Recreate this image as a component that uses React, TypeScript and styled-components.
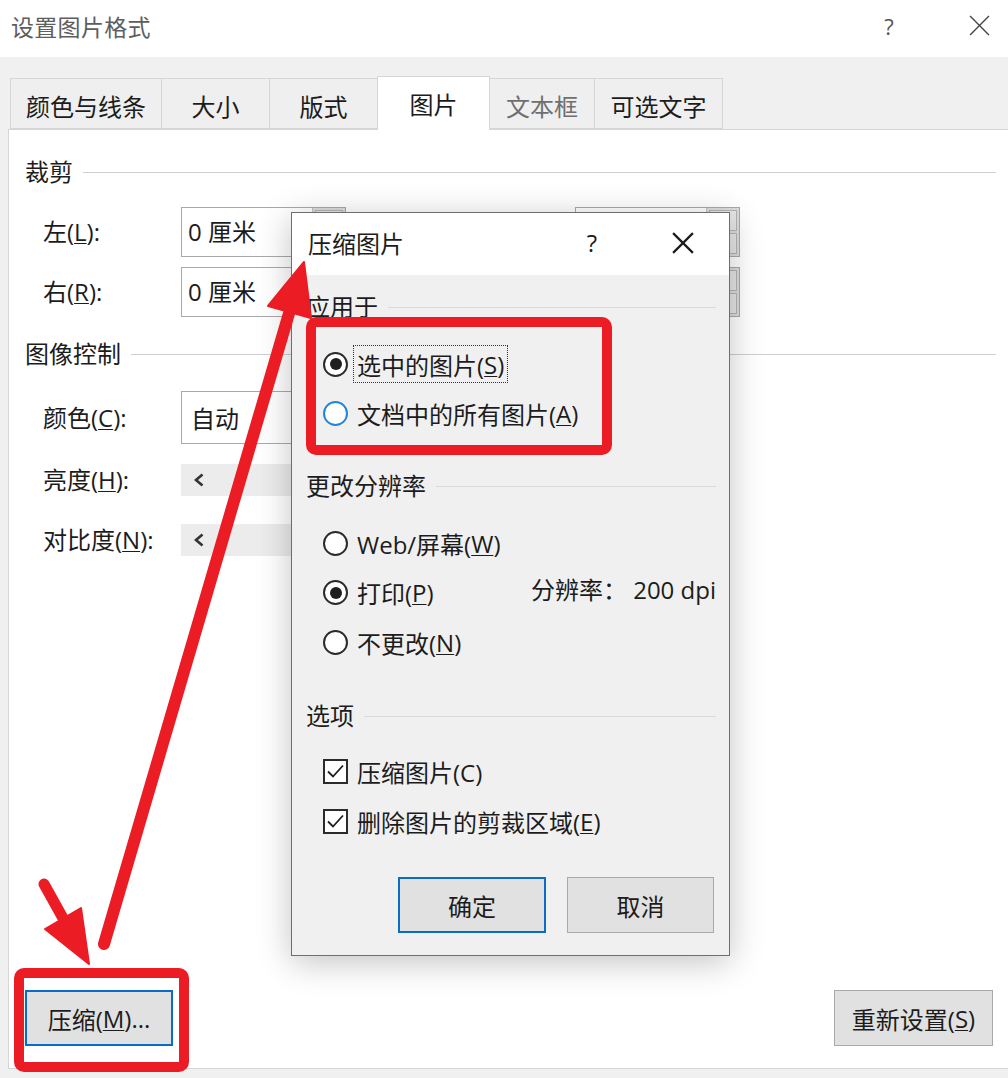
import React from "react";
import styled, { createGlobalStyle } from "styled-components";

const FONT = `"Open Sans", "Noto Sans CJK SC", "Noto Sans", sans-serif`;

const Global = createGlobalStyle`
  html, body { margin: 0; padding: 0; background: #f0f0f0; }
  body { font-family: ${FONT}; color: #1c1c1c; }
  * { box-sizing: border-box; }
  u { text-decoration-thickness: 1px; text-underline-offset: 2px; }
`;

const Page = styled.div`
  position: relative;
  width: 1008px;
  height: 1078px;
  overflow: hidden;
  background: #f0f0f0;
  display: flex;
  flex-direction: column;
`;

/* ---------- window title bar ---------- */
const TitleBar = styled.div`
  flex: none;
  height: 57px;
  background: #fff;
  display: flex;
  align-items: center;
  padding: 0 9px 6px 11px;
`;
const WinTitle = styled.div`
  flex: 1;
  font-size: 23px;
  color: #5e5e5e;
  letter-spacing: 0.3px;
`;
const TitleActions = styled.div<{ $gap: number }>`
  display: flex;
  align-items: center;
  gap: ${(p) => p.$gap}px;
`;
const HelpGlyph = styled.div<{ $size: number; $color: string }>`
  width: 40px;
  text-align: center;
  font-size: ${(p) => p.$size}px;
  color: ${(p) => p.$color};
  line-height: 1;
`;
const CloseBox = styled.div`
  width: 40px;
  display: flex;
  align-items: center;
  justify-content: center;
`;

/* ---------- tabs ---------- */
const TabStrip = styled.div`
  flex: none;
  display: flex;
  align-items: flex-end;
  margin-top: 19px;
  height: 53px;
  padding-left: 10px;
  position: relative;
  z-index: 1;
`;
const Tab = styled.div<{ $w: number; $active?: boolean; $disabled?: boolean }>`
  width: ${(p) => p.$w}px;
  height: ${(p) => (p.$active ? 54 : 51)}px;
  margin-bottom: ${(p) => (p.$active ? -1 : 0)}px;
  margin-right: -1px;
  background: ${(p) => (p.$active ? "#fff" : "#efefef")};
  border: 1px solid #d6d6d6;
  border-bottom: ${(p) => (p.$active ? "none" : "1px solid #d6d6d6")};
  display: flex;
  align-items: center;
  justify-content: center;
  padding-top: ${(p) => (p.$active ? 0 : 4)}px;
  font-size: 24px;
  color: ${(p) => (p.$disabled ? "#6f6f6f" : "#1c1c1c")};
`;

/* ---------- main panel ---------- */
const Panel = styled.div`
  flex: none;
  height: 940px;
  width: 1004px;
  margin-left: 8px;
  background: #fff;
  border: 1px solid #d6d6d6;
  display: flex;
  flex-direction: column;
  padding: 0 18px 22px 16px;
`;
const SectionHead = styled.div<{ $mt: number; $line?: string }>`
  display: flex;
  align-items: center;
  gap: 10px;
  height: 30px;
  margin-top: ${(p) => p.$mt}px;
  font-size: 24px;
  line-height: 30px;
  color: #1c1c1c;
  white-space: nowrap;
  &::after {
    content: "";
    flex: 1;
    height: 1px;
    background: ${(p) => p.$line || "#cfcfcf"};
  }
`;
const PanelHead = styled(SectionHead)`
  margin-right: -3px;
`;
const CropGrid = styled.div`
  display: grid;
  grid-template-columns: 138px 165px 229px 165px;
  grid-auto-rows: 50px;
  row-gap: 10px;
  margin: 20px 0 0 18px;
  align-items: center;
`;
const FieldLabel = styled.div`
  font-size: 24px;
  line-height: 30px;
  white-space: nowrap;
`;
const SpinBox = styled.div`
  height: 50px;
  display: flex;
  border: 1px solid #a9a9a9;
  background: #fff;
`;
const SpinValue = styled.div`
  flex: 1;
  display: flex;
  align-items: center;
  padding: 0 0 3px 6px;
  font-size: 24px;
`;
const SpinButtons = styled.div`
  width: 33px;
  display: flex;
  flex-direction: column;
  background: #dcdcdc;
  border-left: 1px solid #c4c4c4;
  padding: 2px;
  gap: 2px;
`;
const SpinButton = styled.div`
  flex: 1;
  border: 1px solid #b4b4b4;
  background: #e6e6e6;
`;
const ControlRow = styled.div<{ $mt: number; $h: number }>`
  display: grid;
  grid-template-columns: 138px auto;
  align-items: center;
  height: ${(p) => p.$h}px;
  margin: ${(p) => p.$mt}px 0 0 18px;
`;
const DropBox = styled.div`
  width: 300px;
  height: 53px;
  border: 1px solid #a9a9a9;
  background: #fff;
  display: flex;
  align-items: center;
  padding-left: 9px;
  font-size: 24px;
`;
const SliderBar = styled.div`
  width: 380px;
  height: 32px;
  background: #ececec;
  display: flex;
  align-items: center;
  padding-left: 13px;
`;
const Grow = styled.div`
  flex: 1;
`;
const BottomRow = styled.div`
  display: flex;
  justify-content: space-between;
  align-items: center;
`;
const WinButton = styled.div<{ $w: number; $primary?: boolean }>`
  width: ${(p) => p.$w}px;
  height: 56px;
  background: #e1e1e1;
  border: ${(p) => (p.$primary ? "2px solid #0a6cc8" : "1px solid #a9a9a9")};
  display: flex;
  align-items: center;
  justify-content: center;
  font-size: 24px;
  color: #1c1c1c;
  white-space: nowrap;
`;

/* ---------- compress dialog ---------- */
const Dialog = styled.div`
  position: absolute;
  left: 291px;
  top: 212px;
  width: 439px;
  height: 744px;
  border: 1px solid #6e6e6e;
  background: #f0f0f0;
  box-shadow: 0 6px 32px rgba(0, 0, 0, 0.24);
  display: flex;
  flex-direction: column;
`;
const DlgTitleBar = styled.div`
  flex: none;
  height: 62px;
  background: #fff;
  display: flex;
  align-items: center;
  padding: 0 26px 3px 16px;
`;
const DlgTitle = styled.div`
  flex: 1;
  font-size: 24px;
  color: #1c1c1c;
`;
const DlgBody = styled.div`
  flex: 1;
  display: flex;
  flex-direction: column;
  padding: 17px 13px 20px 14px;
`;
const OptionGroup = styled.div<{ $mt: number; $gap: number }>`
  display: flex;
  flex-direction: column;
  gap: ${(p) => p.$gap}px;
  margin-top: ${(p) => p.$mt}px;
  padding-left: 17px;
`;
const OptionRow = styled.div`
  height: 40px;
  display: flex;
  align-items: center;
  gap: 5px;
`;
const OptionLabel = styled.div<{ $focus?: boolean }>`
  height: 38px;
  display: flex;
  align-items: center;
  padding: 0 3px;
  border: 1px ${(p) => (p.$focus ? "dotted #333" : "solid transparent")};
  font-size: 24px;
  color: #1c1c1c;
  white-space: nowrap;
`;
const Radio = styled.div<{ $checked?: boolean; $hover?: boolean }>`
  width: 25px;
  height: 25px;
  flex: none;
  border-radius: 50%;
  border: 2px solid ${(p) => (p.$hover ? "#1f86e0" : "#2b2b2b")};
  background: #fff;
  display: flex;
  align-items: center;
  justify-content: center;
  &::after {
    content: "";
    display: ${(p) => (p.$checked ? "block" : "none")};
    width: 12px;
    height: 12px;
    border-radius: 50%;
    background: #1e1e1e;
  }
`;
const CheckBox = styled.div`
  width: 25px;
  height: 25px;
  flex: none;
  border: 2px solid #2b2b2b;
  background: #fff;
  display: flex;
  align-items: center;
  justify-content: center;
`;
const Spread = styled.div`
  display: flex;
  align-items: center;
  justify-content: space-between;
`;
const Resolution = styled.div`
  font-size: 24px;
  color: #1c1c1c;
  white-space: nowrap;
  padding-bottom: 8px;
`;
const DlgButtons = styled.div`
  display: flex;
  justify-content: flex-end;
  gap: 21px;
  margin-top: 36px;
  padding-right: 2px;
`;

/* ---------- annotations ---------- */
const Overlay = styled.svg`
  position: absolute;
  left: 0;
  top: 0;
  width: 1008px;
  height: 1078px;
  pointer-events: none;
`;

const CloseIcon = ({ size, stroke, color }: { size: number; stroke: number; color: string }) => (
  <svg width={size} height={size} viewBox="0 0 20 20">
    <path d="M1 1 L19 19 M19 1 L1 19" stroke={color} strokeWidth={stroke} fill="none" />
  </svg>
);

const Chevron = () => (
  <svg width="10" height="14" viewBox="0 0 10 14">
    <polyline points="8.5,1.5 2,7 8.5,12.5" stroke="#333" strokeWidth="2.6" fill="none" />
  </svg>
);

const Check = () => (
  <svg width="19" height="19" viewBox="0 0 19 19">
    <polyline points="2,9.5 7,14.5 17,3.5" stroke="#1e1e1e" strokeWidth="1.8" fill="none" />
  </svg>
);

const tabs = [
  { label: "颜色与线条", w: 152 },
  { label: "大小", w: 109 },
  { label: "版式", w: 109 },
  { label: "图片", w: 113, active: true },
  { label: "文本框", w: 106, disabled: true },
  { label: "可选文字", w: 129 },
];

const Spin = ({ value }: { value?: string }) => (
  <SpinBox>
    <SpinValue>{value}</SpinValue>
    <SpinButtons>
      <SpinButton />
      <SpinButton />
    </SpinButtons>
  </SpinBox>
);

export default function App() {
  const red = "#ec1c24";
  return (
    <>
      <Global />
      <Page>
        <TitleBar>
          <WinTitle>设置图片格式</WinTitle>
          <TitleActions $gap={50}>
            <HelpGlyph $size={22} $color="#555">?</HelpGlyph>
            <CloseBox>
              <CloseIcon size={21} stroke={1.3} color="#444" />
            </CloseBox>
          </TitleActions>
        </TitleBar>

        <TabStrip>
          {tabs.map((t) => (
            <Tab key={t.label} $w={t.w} $active={t.active} $disabled={t.disabled}>
              {t.label}
            </Tab>
          ))}
        </TabStrip>

        <Panel>
          <PanelHead $mt={27}>裁剪</PanelHead>
          <CropGrid>
            <FieldLabel>
              左(<u>L</u>):
            </FieldLabel>
            <Spin value="0 厘米" />
            <div />
            <Spin />
            <FieldLabel>
              右(<u>R</u>):
            </FieldLabel>
            <Spin value="0 厘米" />
            <div />
            <Spin />
          </CropGrid>

          <PanelHead $mt={22}>图像控制</PanelHead>
          <ControlRow $mt={22} $h={53}>
            <FieldLabel>
              颜色(<u>C</u>):
            </FieldLabel>
            <DropBox>自动</DropBox>
          </ControlRow>
          <ControlRow $mt={20} $h={32}>
            <FieldLabel>
              亮度(<u>H</u>):
            </FieldLabel>
            <SliderBar>
              <Chevron />
            </SliderBar>
          </ControlRow>
          <ControlRow $mt={28} $h={32}>
            <FieldLabel>
              对比度(<u>N</u>):
            </FieldLabel>
            <SliderBar>
              <Chevron />
            </SliderBar>
          </ControlRow>

          <Grow />
          <BottomRow>
            <WinButton $w={148} $primary>
              压缩(<u>M</u>)...
            </WinButton>
            <WinButton $w={159}>
              重新设置(<u>S</u>)
            </WinButton>
          </BottomRow>
        </Panel>

        <Dialog>
          <DlgTitleBar>
            <DlgTitle>压缩图片</DlgTitle>
            <TitleActions $gap={51}>
              <HelpGlyph $size={24} $color="#1c1c1c">?</HelpGlyph>
              <CloseBox>
                <CloseIcon size={22} stroke={2} color="#1c1c1c" />
              </CloseBox>
            </TitleActions>
          </DlgTitleBar>
          <DlgBody>
            <SectionHead $mt={0} $line="#dadada">应用于</SectionHead>
            <OptionGroup $mt={22} $gap={9}>
              <OptionRow>
                <Radio $checked />
                <OptionLabel $focus>
                  选中的图片(<u>S</u>)
                </OptionLabel>
              </OptionRow>
              <OptionRow>
                <Radio $hover />
                <OptionLabel>
                  文档中的所有图片(<u>A</u>)
                </OptionLabel>
              </OptionRow>
            </OptionGroup>

            <SectionHead $mt={38} $line="#dadada">更改分辨率</SectionHead>
            <OptionGroup $mt={22} $gap={8}>
              <OptionRow>
                <Radio />
                <OptionLabel>
                  Web/屏幕(<u>W</u>)
                </OptionLabel>
              </OptionRow>
              <Spread>
                <OptionRow>
                  <Radio $checked />
                  <OptionLabel>
                    打印(<u>P</u>)
                  </OptionLabel>
                </OptionRow>
                <Resolution>分辨率：&nbsp;200 dpi</Resolution>
              </Spread>
              <OptionRow>
                <Radio />
                <OptionLabel>
                  不更改(<u>N</u>)
                </OptionLabel>
              </OptionRow>
            </OptionGroup>

            <SectionHead $mt={39} $line="#dadada">选项</SectionHead>
            <OptionGroup $mt={20} $gap={10}>
              <OptionRow>
                <CheckBox>
                  <Check />
                </CheckBox>
                <OptionLabel>压缩图片(C)</OptionLabel>
              </OptionRow>
              <OptionRow>
                <CheckBox>
                  <Check />
                </CheckBox>
                <OptionLabel>
                  删除图片的剪裁区域(<u>E</u>)
                </OptionLabel>
              </OptionRow>
            </OptionGroup>

            <DlgButtons>
              <WinButton $w={148} $primary>
                确定
              </WinButton>
              <WinButton $w={147}>取消</WinButton>
            </DlgButtons>
          </DlgBody>
        </Dialog>

        <Overlay viewBox="0 0 1008 1078">
          <rect x="19" y="973" width="165" height="94" rx="5" fill="none" stroke={red} strokeWidth="10" />
          <rect x="311" y="322" width="296" height="128" rx="5" fill="none" stroke={red} strokeWidth="10" />
          <line x1="104" y1="944" x2="290" y2="310" stroke={red} strokeWidth="12" strokeLinecap="round" />
          <polygon points="304,262 268,306 311,318" fill={red} stroke={red} strokeWidth="2" strokeLinejoin="round" />
          <line x1="44" y1="884" x2="64" y2="920" stroke={red} strokeWidth="11" strokeLinecap="round" />
          <polygon points="89,964 45,929 81,908" fill={red} stroke={red} strokeWidth="2" strokeLinejoin="round" />
        </Overlay>
      </Page>
    </>
  );
}
